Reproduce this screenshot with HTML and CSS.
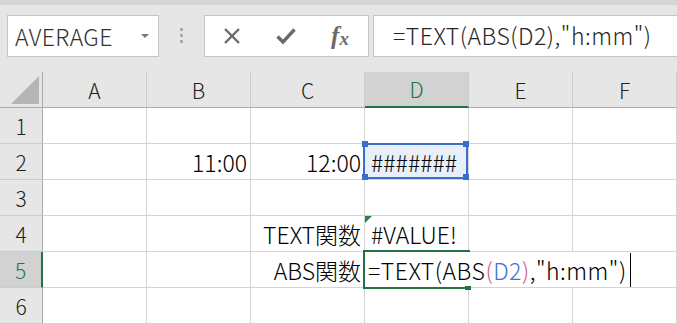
FILE: index.html
```html
<!DOCTYPE html>
<html lang="ja">
<head>
  <meta charset="UTF-8" />
  <title>Excel TEXT ABS</title>
  <link rel="stylesheet" href="styles.css">
</head>
<body>
  <div class="strip"></div>

  <div class="toolbar">
    <div class="namebox">
      <span>AVERAGE</span>
      <span class="caret"></span>
    </div>
    <div class="grip"><i></i><i></i><i></i></div>
    <div class="fxbtns">
      <span class="btn">
        <svg width="18" height="16" viewBox="0 0 18 16">
          <path d="M2 1 L16 15 M16 1 L2 15" stroke="#6b6b6b" stroke-width="2.4" fill="none" />
        </svg>
      </span>
      <span class="btn">
        <svg width="20" height="18" viewBox="0 0 20 18">
          <path d="M1.5 9.5 L7 15 L18.5 2.5" stroke="#6b6b6b" stroke-width="3.4" fill="none" />
        </svg>
      </span>
      <span class="btn fx"><em>f</em><em class="x">x</em></span>
    </div>
    <div class="formula">=TEXT(ABS(D2),"h:mm")</div>
  </div>

  <div class="sheet">
    <!-- column headers -->
    <div class="corner"><span class="tri"></span></div>
    <div class="ch">A</div>
    <div class="ch">B</div>
    <div class="ch">C</div>
    <div class="ch on">D</div>
    <div class="ch">E</div>
    <div class="ch">F</div>

    <!-- row 1 -->
    <div class="rh">1</div>
    <div class="c"></div><div class="c"></div><div class="c"></div><div class="c"></div><div class="c"></div><div class="c"></div>

    <!-- row 2 -->
    <div class="rh">2</div>
    <div class="c"></div>
    <div class="c r">11:00</div>
    <div class="c r">12:00</div>
    <div class="c sel">#######
      <div class="selbox">
        <i class="hd tl"></i><i class="hd tr"></i><i class="hd bl"></i><i class="hd br"></i>
      </div>
    </div>
    <div class="c"></div><div class="c"></div>

    <!-- row 3 -->
    <div class="rh">3</div>
    <div class="c"></div><div class="c"></div><div class="c"></div><div class="c"></div><div class="c"></div><div class="c"></div>

    <!-- row 4 -->
    <div class="rh">4</div>
    <div class="c"></div><div class="c"></div>
    <div class="c r">TEXT関数</div>
    <div class="c err">#VALUE!</div>
    <div class="c"></div><div class="c"></div>

    <!-- row 5 -->
    <div class="rh on">5</div>
    <div class="c"></div><div class="c"></div>
    <div class="c r">ABS関数</div>
    <div class="c act">
      <div class="edit">=TEXT(ABS<span class="pk">(</span><span class="bl">D2</span><span class="pk">)</span>,"h:mm")<span class="cursor"></span></div>
      <div class="actbox"></div>
      <i class="fill"></i>
    </div>
    <div class="c"></div><div class="c"></div>

    <!-- row 6 -->
    <div class="rh">6</div>
    <div class="c"></div><div class="c"></div><div class="c"></div><div class="c"></div><div class="c"></div><div class="c"></div>
  </div>
</body>
</html>
```

FILE: styles.css
```css
* { box-sizing: border-box; }

body {
  margin: 0;
  background: #e6e6e6;
  font-family: "Noto Sans CJK JP", "Noto Sans", sans-serif;
  font-weight: 300;
  color: #000;
  overflow: hidden;
}

.strip {
  height: 5px;
  background: #d6d6d6;
}

/* formula bar */
.toolbar {
  height: 67px;
  display: flex;
  align-items: flex-start;
  padding: 10px 0 0 7px;
}

.namebox {
  width: 152px;
  height: 42px;
  background: #fff;
  border: 1px solid #c6c6c6;
  display: flex;
  align-items: center;
  padding-left: 7px;
  font-size: 23px;
  letter-spacing: 0.4px;
  color: #333;
}

.caret {
  margin-left: auto;
  margin-right: 9px;
  width: 0;
  height: 0;
  border-left: 4px solid transparent;
  border-right: 4px solid transparent;
  border-top: 4px solid #777;
}

.grip {
  width: 45px;
  display: flex;
  flex-direction: column;
  align-items: center;
  gap: 3px;
  padding-top: 13px;
}

.grip i {
  width: 3px;
  height: 3px;
  background: #aaa;
}

.fxbtns {
  width: 165px;
  height: 42px;
  background: #fff;
  border: 1px solid #c6c6c6;
  display: flex;
}

.btn {
  width: 54px;
  display: flex;
  align-items: center;
  justify-content: center;
}

.fx {
  font-family: "Liberation Serif", serif;
  font-size: 25px;
  color: #6b6b6b;
  font-weight: bold;
}

.fx em { font-style: italic; }
.fx .x { font-size: 19px; margin-top: 5px; }

.formula {
  flex: 1;
  margin-left: 4px;
  height: 42px;
  background: #fff;
  border: 1px solid #c6c6c6;
  border-right: none;
  padding-left: 19px;
  font-size: 23px;
  letter-spacing: 0.5px;
  line-height: 38px;
  color: #262626;
  white-space: nowrap;
}

/* grid */
.sheet {
  display: grid;
  grid-template-columns: 43px 104px 104px 114px 104px 104px 1fr;
  grid-auto-rows: 36px;
}

.corner, .ch, .rh {
  background: #e6e6e6;
  display: flex;
  align-items: center;
  justify-content: center;
  font-size: 21px;
  color: #222;
}

.corner {
  border-right: 1px solid #ababab;
  border-bottom: 1px solid #ababab;
  position: relative;
}

.tri {
  position: absolute;
  left: 11px;
  bottom: 3px;
  width: 0;
  height: 0;
  border-left: 28px solid transparent;
  border-bottom: 28px solid #b5b5b5;
}

.ch {
  border-right: 1px solid #cdcdcd;
  border-bottom: 1px solid #ababab;
}

.rh {
  border-right: 1px solid #ababab;
  border-bottom: 1px solid #cdcdcd;
}

.ch.on {
  background: #d2d2d2;
  color: #217346;
  border-bottom: 2px solid #217346;
}

.rh.on {
  background: #d2d2d2;
  color: #217346;
  border-right: 2px solid #217346;
}

.c {
  background: #fff;
  border-right: 1px solid #d4d4d4;
  border-bottom: 1px solid #d4d4d4;
  display: flex;
  align-items: center;
  padding: 0 3px 0 6px;
  font-size: 23px;
  white-space: nowrap;
}

.c.r { justify-content: flex-end; }

/* selected D2 */
.sel {
  position: relative;
  background: #e9eff9;
}

.selbox {
  position: absolute;
  left: -2px;
  top: -1px;
  right: 0;
  bottom: 0;
  border: 2px solid #3a6fc9;
}

.hd {
  position: absolute;
  width: 6px;
  height: 6px;
  background: #3a6fc9;
}

.hd.tl { left: -3px; top: -4px; }
.hd.tr { right: -3px; top: -4px; }
.hd.bl { left: -3px; bottom: -3px; }
.hd.br { right: -3px; bottom: -3px; }

/* D4 error flag */
.err { position: relative; }

.err::before {
  content: "";
  position: absolute;
  left: 0;
  top: 0;
  border-top: 7px solid #1f8a3c;
  border-right: 7px solid transparent;
}

/* D5 in edit mode */
.act {
  position: relative;
  overflow: visible;
}

.edit {
  position: absolute;
  left: 0;
  top: 0;
  height: 35px;
  width: 268px;
  background: #fff;
  display: flex;
  align-items: center;
  padding-left: 3px;
  letter-spacing: 0.5px;
  z-index: 2;
}

.pk { color: #d4567a; }
.bl { color: #4272d7; }

.cursor {
  width: 1px;
  height: 34px;
  background: #000;
  margin-left: 3px;
}

.actbox {
  position: absolute;
  left: -2px;
  top: -2px;
  width: 107px;
  height: 39px;
  border: 2px solid #217346;
  border-right: none;
  z-index: 3;
  pointer-events: none;
}

.fill {
  position: absolute;
  left: 100px;
  top: 34px;
  width: 6px;
  height: 4px;
  background: #217346;
  z-index: 4;
}
```
